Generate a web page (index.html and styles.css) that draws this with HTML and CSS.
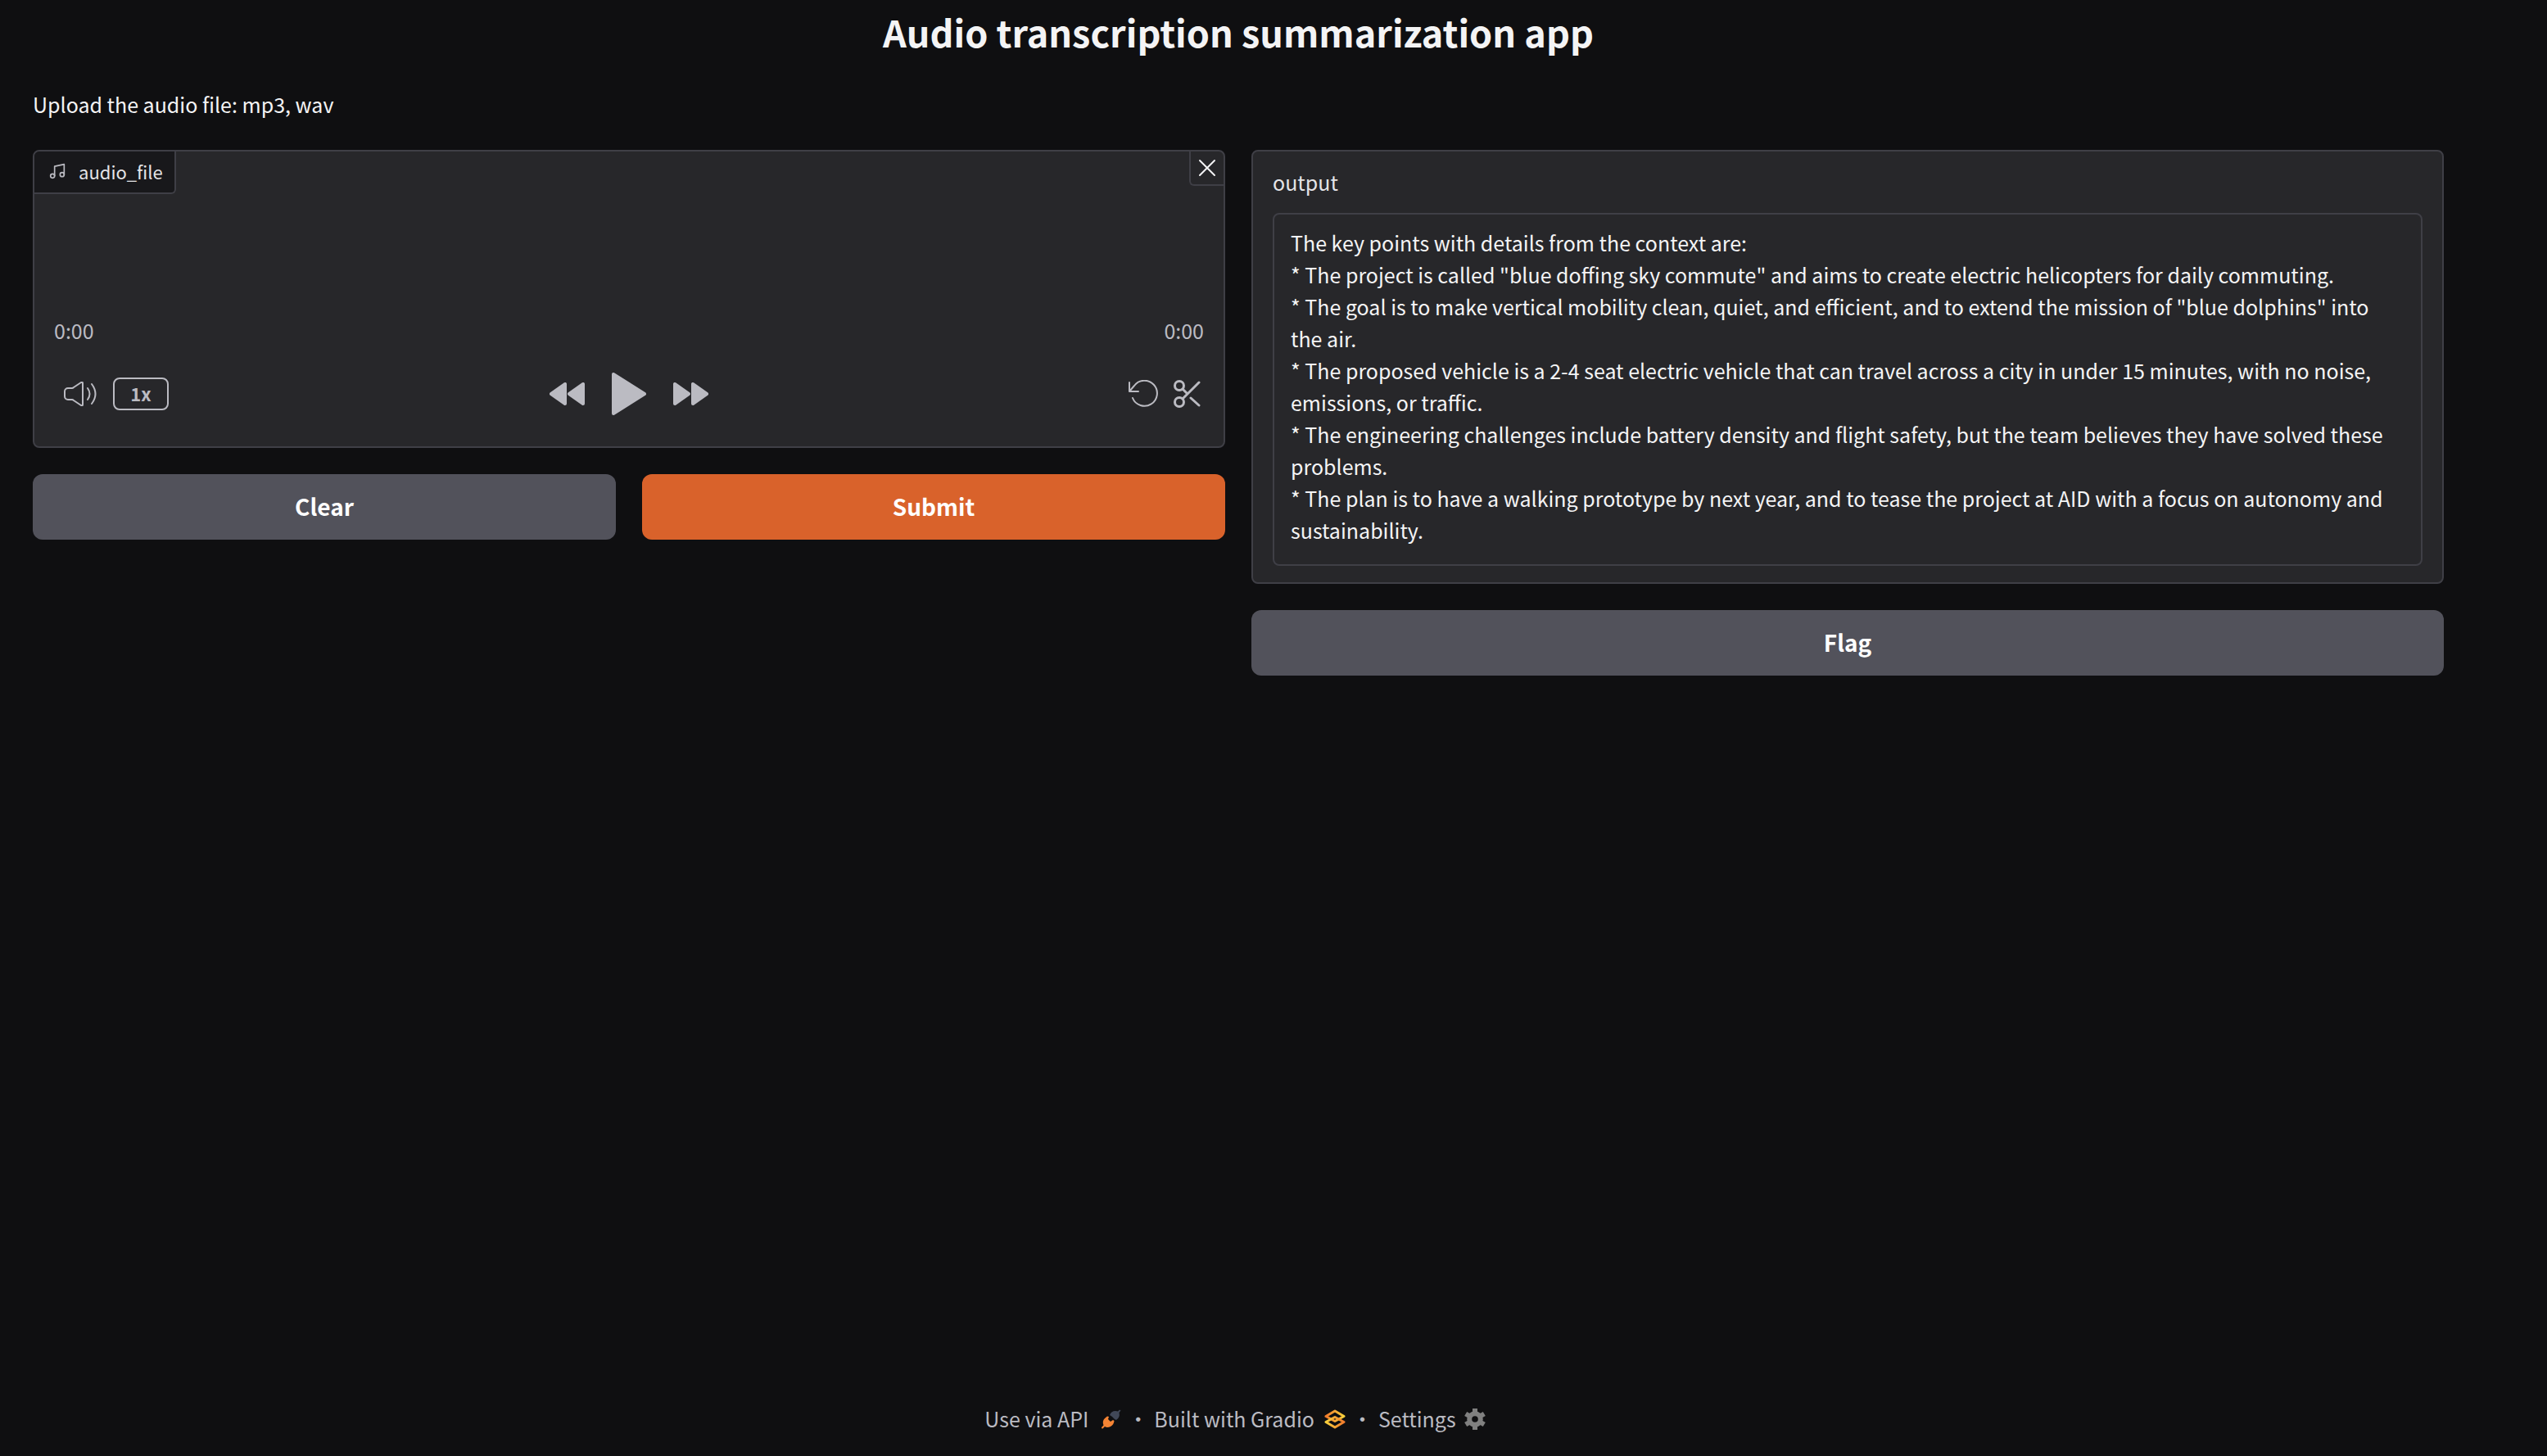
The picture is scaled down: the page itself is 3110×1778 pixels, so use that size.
FILE: index.html
```html
<!DOCTYPE html>
<html lang="en">
<head>
<meta charset="utf-8">
<meta name="viewport" content="width=device-width, initial-scale=1">
<title>Audio transcription summarization app</title>
<link rel="stylesheet" href="styles.css">
</head>
<body>
<div class="app">
  <header class="intro">
    <h1 class="title">Audio transcription summarization app</h1>
    <p class="description">Upload the audio file: mp3, wav</p>
  </header>
  <main class="columns">
    <section class="column">
      <div class="panel audio">
        <div class="audio-top">
          <h2 class="tag">
            <svg class="icon-note" viewBox="0 0 24 24"><path d="M8 19V5l14-3v15"/><circle cx="5" cy="19" r="3"/><circle cx="19" cy="17" r="3"/></svg>
            audio_file
          </h2>
          <button class="close" type="button" aria-label="Remove audio">
            <svg class="icon-close" viewBox="0 0 22 22"><path d="M2 2l18 18M20 2L2 20"/></svg>
          </button>
        </div>
        <div class="times"><span>0:00</span><span>0:00</span></div>
        <div class="controls">
          <div class="group">
            <button class="icon-button" type="button" aria-label="Volume">
              <svg class="icon-volume" viewBox="0 0 40 30"><path d="M1 12a4 4 0 0 1 4-4h5q1 0 2-1l9-6q2-1 2 1v26q0 2-2 1l-9-6q-1-1-2-1H5a4 4 0 0 1-4-4z"/><path d="M29 8q5 7 0 14M34 3q9 12 0 24"/></svg>
            </button>
            <button class="speed" type="button">1x</button>
          </div>
          <div class="group transport">
            <button class="icon-button" type="button" aria-label="Skip backwards">
              <svg class="icon-skip" viewBox="0 0 44 28"><path d="M2 14L19 2v24zM24 14L41 2v24z"/></svg>
            </button>
            <button class="icon-button" type="button" aria-label="Play">
              <svg class="icon-play" viewBox="0 0 42 52"><path d="M2 2v48l38-24z"/></svg>
            </button>
            <button class="icon-button" type="button" aria-label="Skip forward">
              <svg class="icon-skip" viewBox="0 0 44 28"><path d="M42 14L25 2v24zM20 14L3 2v24z"/></svg>
            </button>
          </div>
          <div class="group tools">
            <button class="icon-button" type="button" aria-label="Reset audio">
              <svg class="icon-undo" viewBox="0 0 36 34"><path d="M1 3v11h11M1 14L7 7A15.500 15.500 0 1 1 5 22"/></svg>
            </button>
            <button class="icon-button" type="button" aria-label="Trim audio">
              <svg class="icon-trim" viewBox="0 0 34 34"><circle cx="8" cy="7" r="5.500"/><circle cx="8" cy="27" r="5.500"/><path d="M32 3L12 23M12 11l6 6M22 22l10 9"/></svg>
            </button>
          </div>
        </div>
      </div>
      <div class="actions">
        <button class="button" type="button">Clear</button>
        <button class="button primary" type="button">Submit</button>
      </div>
    </section>
    <section class="column">
      <div class="panel result">
        <label class="label" for="output">output</label>
        <textarea class="output" id="output" rows="10" readonly>The key points with details from the context are:
* The project is called "blue doffing sky commute" and aims to create electric helicopters for daily commuting.
* The goal is to make vertical mobility clean, quiet, and efficient, and to extend the mission of "blue dolphins" into the air.
* The proposed vehicle is a 2-4 seat electric vehicle that can travel across a city in under 15 minutes, with no noise, emissions, or traffic.
* The engineering challenges include battery density and flight safety, but the team believes they have solved these problems.
* The plan is to have a walking prototype by next year, and to tease the project at AID with a focus on autonomy and sustainability.</textarea>
      </div>
      <div class="actions">
        <button class="button" type="button">Flag</button>
      </div>
    </section>
  </main>
  <footer class="footer">
    <a class="footer-link" href="#api">Use via API
      <svg class="icon-plug" viewBox="-4 0 28 24"><path fill="#f58434" d="M0 22l2.500-2.500Q.5 14 4 11l3-2.500L9 9l-1 3 3 3 3-2 1.500 1Q15 19 11 21q-4 2-7 0l-2.500 2.500Q0 24 0 22z"/><path fill="#414858" d="M10 7q2-5 7-5l3 .5L22 .5l1.500 1-2 2.500Q23 10 18 13l-2-1-3-3z"/></svg>
    </a>
    <span class="dot">·</span>
    <a class="footer-link" href="#gradio">Built with Gradio
      <svg class="icon-gradio" viewBox="0 0 26 24">
        <defs><linearGradient id="gold"><stop offset="0" stop-color="#f9d13c"/><stop offset="1" stop-color="#f17a2c"/></linearGradient><linearGradient id="amber"><stop offset="0" stop-color="#f17a2c"/><stop offset="1" stop-color="#f9d13c"/></linearGradient></defs>
        <path stroke="url(#amber)" d="M13 2L24 8.500 13 14.500 2 8.500z"/><path stroke="url(#gold)" d="M13 9.500L24 15.500 13 22 2 15.500z"/>
      </svg>
    </a>
    <span class="dot">·</span>
    <a class="footer-link" href="#settings">Settings
      <svg class="icon-gear" viewBox="0 0 26 26"><circle cx="13" cy="13" r="6.800"/><path d="M13 0v7M13 19v7M1.700 6.500l6 3.500M18.300 16l6 3.500M1.700 19.500l6-3.500M18.300 10l6-3.500"/></svg>
    </a>
  </footer>
</div>
</body>
</html>
```
FILE: styles.css
```css
* { box-sizing: border-box; }

body {
  margin: 0;
  padding-right: 86px;
  background: #0f0f11;
  color: #f4f4f5;
  font: 25px/39px "Noto Sans CJK SC", "Noto Sans", sans-serif;
}

button, textarea { font: inherit; color: inherit; margin: 0; }
button { border: 0; padding: 0; background: none; cursor: pointer; }
svg { display: block; flex: none; fill: none; stroke: currentColor; stroke-width: 2; stroke-linecap: round; stroke-linejoin: round; }

.app { display: flex; flex-direction: column; min-height: 100vh; padding: 6px 40px 26px; }
.title { margin: 0; font-size: 45px; line-height: 66px; font-weight: 700; text-align: center; }
.description { margin: 36px 0; }
.columns { display: grid; grid-template-columns: 1fr 1fr; gap: 32px; align-items: start; flex: 1; }
.column { display: flex; flex-direction: column; gap: 32px; min-width: 0; }
.panel { border: 2px solid #3f3f46; border-radius: 8px; background: #27272a; }

.audio { color: #bbbbc2; padding-bottom: 38px; }
.audio-top { display: flex; justify-content: space-between; align-items: flex-start; }
.tag { display: flex; align-items: center; gap: 16px; margin: 0; padding: 4px 14px 6px 16px; border: solid #3f3f46; border-width: 0 2px 2px 0; border-radius: 6px 0; background: #18181b; color: #e4e4e7; font-size: 22px; line-height: 40px; font-weight: 400; }
.icon-note { width: 20px; height: 20px; margin-left: 2px; color: #bbbbc2; }
.close { display: grid; place-items: center; width: 42px; height: 42px; border: solid #3f3f46; border-width: 0 0 2px 2px; border-radius: 0 6px; color: #f4f4f5; }
.icon-close { width: 22px; height: 22px; }
.times { display: flex; justify-content: space-between; margin-top: 147px; padding: 0 24px; }
.controls { display: grid; grid-template-columns: 1fr auto 1fr; align-items: center; margin-top: 32px; padding: 0 28px; height: 52px; }
.group { display: flex; align-items: center; gap: 20px; }
.icon-volume { width: 40px; height: 30px; margin-left: 8px; }
.speed { width: 68px; height: 40px; padding-bottom: 2px; border: 2px solid #bbbbc2; border-radius: 8px; font-size: 22px; line-height: 34px; font-weight: 700; }
.transport { gap: 32px; }
.icon-skip { width: 44px; height: 28px; fill: currentColor; stroke-width: 4; }
.icon-play { width: 42px; height: 52px; fill: currentColor; stroke-width: 4; }
.tools { justify-content: flex-end; gap: 18px; }
.icon-undo { width: 36px; height: 34px; }
.icon-trim { width: 34px; height: 34px; stroke-width: 3; }

.actions { display: flex; gap: 32px; }
.button { flex: 1; height: 80px; padding-bottom: 2px; border-radius: 12px; background: #52525b; color: #fff; font-size: 28px; line-height: 44px; font-weight: 700; }
.primary { background: #d9622b; }

.result { padding: 18px 24px 20px; }
.label { display: block; margin-bottom: 18px; color: #e4e4e7; }
.output { display: block; width: 100%; padding: 15px 20px 22px; border: 2px solid #3f3f46; border-radius: 8px; background: transparent; resize: none; overflow: hidden; outline: none; }

.footer { display: flex; justify-content: center; gap: 8px; padding-right: 8px; color: #bbbbc2; }
.footer-link { display: flex; align-items: center; gap: 12px; color: inherit; text-decoration: none; }
.dot { width: 24px; text-align: center; }
.icon-plug { width: 28px; height: 24px; stroke: none; }
.icon-gradio { width: 26px; height: 24px; stroke-width: 3; }
.icon-gear { width: 26px; height: 26px; margin-left: -2px; color: #808080; stroke-width: 6; stroke-linecap: butt; }
```
